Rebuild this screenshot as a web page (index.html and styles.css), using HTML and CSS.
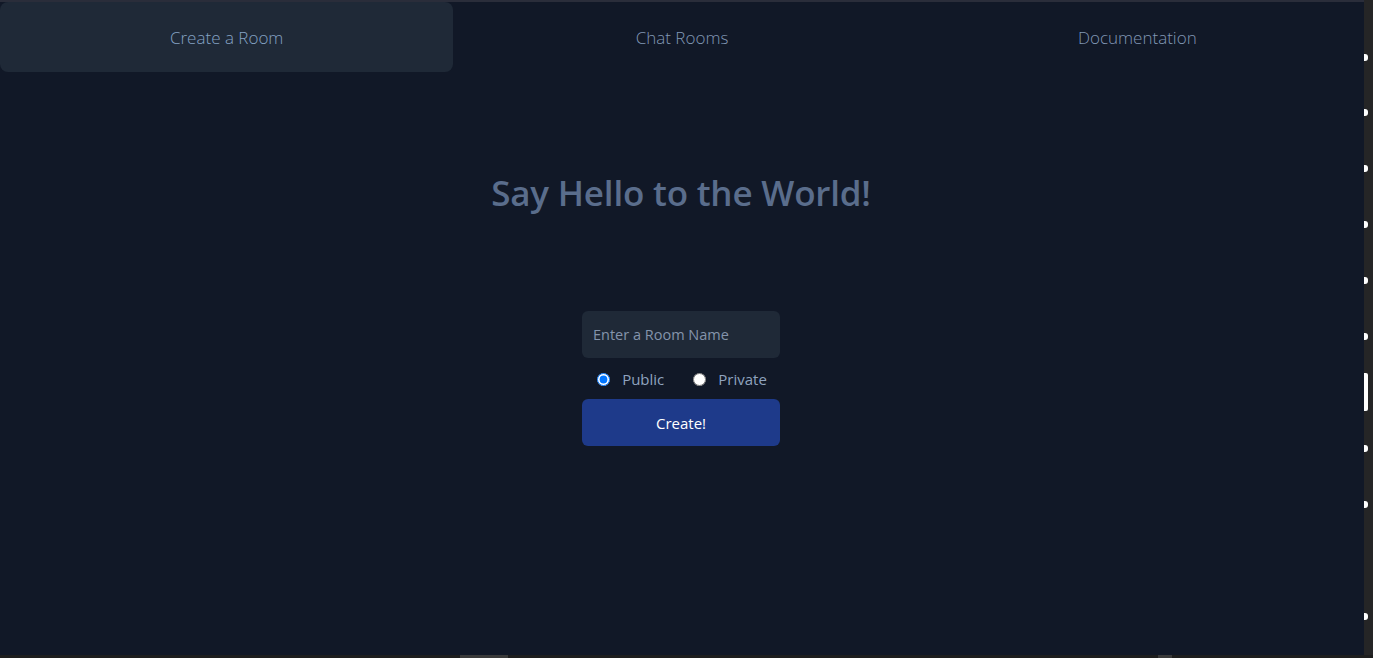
FILE: index.html
```html
<!DOCTYPE html>
<html lang="en">
<head>
<meta charset="utf-8">
<title>Say Hello to the World!</title>
<link rel="stylesheet" href="styles.css">
</head>
<body>
<div class="frame">
  <div class="viewport">
    <nav class="tabs">
      <a class="tab active">Create a Room</a>
      <a class="tab">Chat Rooms</a>
      <a class="tab">Documentation</a>
    </nav>
    <main class="hero">
      <h1 class="title">Say Hello to the World!</h1>
      <form class="room-form">
        <input class="room-input" type="text" placeholder="Enter a Room Name">
        <div class="radios">
          <label class="radio"><input type="radio" name="vis" checked><span>Public</span></label>
          <label class="radio"><input type="radio" name="vis"><span>Private</span></label>
        </div>
        <button class="create-btn" type="button">Create!</button>
      </form>
    </main>
  </div>
  <div class="gutter">
    <span class="mark m1"></span>
    <span class="mark m2"></span>
    <span class="mark m3"></span>
    <span class="mark m4"></span>
    <span class="mark m5"></span>
    <span class="mark m6"></span>
    <span class="mark bar"></span>
    <span class="mark m8"></span>
    <span class="mark m9"></span>
    <span class="mark m10"></span>
  </div>
</div>
<div class="hbar">
  <span class="thumb t1"></span>
  <span class="thumb t2"></span>
</div>
</body>
</html>
```

FILE: styles.css
```css
html, body {
  margin: 0;
  padding: 0;
}
body {
  background: #111827;
  font-family: "Open Sans", "Noto Sans", sans-serif;
  width: 1373px;
  height: 658px;
  overflow: hidden;
}
.frame {
  display: flex;
  height: 655px;
}
.viewport {
  width: 1364px;
  border-top: 2px solid #2a2d3a;
  display: flex;
  flex-direction: column;
}
.tabs {
  display: grid;
  grid-template-columns: repeat(3, 1fr);
  column-gap: 2px;
  height: 70px;
}
.tab {
  display: flex;
  align-items: center;
  justify-content: center;
  font-size: 17px;
  font-weight: 300;
  color: #8197b5;
  border-radius: 8px;
  cursor: pointer;
}
.tab.active {
  background: #1f2937;
  color: #85a2c4;
}
.hero {
  display: flex;
  flex-direction: column;
  align-items: center;
  padding-right: 2px;
}
.title {
  margin: 101px 0 0;
  font-size: 35px;
  line-height: 40px;
  font-weight: 600;
  color: #5a6d8c;
  letter-spacing: -0.2px;
}
.room-form {
  margin-top: 98px;
  display: flex;
  flex-direction: column;
  align-items: center;
}
.room-input {
  box-sizing: border-box;
  width: 198px;
  height: 47px;
  padding: 0 12px 0 11px;
  border: none;
  border-radius: 6px;
  background: #1f2937;
  font-family: inherit;
  font-size: 14.5px;
  color: #cbd5e1;
  outline: none;
}
.room-input::placeholder {
  color: #8494ab;
}
.radios {
  height: 41px;
  display: flex;
  align-items: center;
  gap: 29px;
  padding-top: 1px;
  padding-left: 2px;
  box-sizing: border-box;
}
.radio {
  display: flex;
  align-items: center;
  gap: 12px;
  font-size: 15px;
  color: #8fa3bf;
}
.radio input {
  margin: 0;
  width: 13px;
  height: 13px;
}
.create-btn {
  width: 198px;
  height: 47px;
  border: none;
  border-radius: 6px;
  background: #1e3a8a;
  color: #ffffff;
  font-family: inherit;
  font-size: 15px;
  cursor: pointer;
}
.gutter {
  width: 9px;
  background: #252526;
  position: relative;
}
.mark {
  position: absolute;
  left: 0;
  width: 4px;
  height: 7px;
  background: #ffffff;
  border-radius: 0 3px 3px 0;
}
.m1 { top: 54px; }
.m2 { top: 109px; }
.m3 { top: 165px; }
.m4 { top: 221px; }
.m5 { top: 277px; }
.m6 { top: 333px; }
.bar { top: 373px; height: 38px; border-radius: 0 2px 2px 0; }
.m8 { top: 445px; }
.m9 { top: 501px; }
.m10 { top: 613px; }
.hbar {
  height: 3px;
  background: #1e1e1e;
  position: relative;
}
.thumb {
  position: absolute;
  top: 0;
  height: 3px;
  background: #3a3a3a;
}
.t1 { left: 460px; width: 48px; }
.t2 { left: 1158px; width: 14px; }
```
